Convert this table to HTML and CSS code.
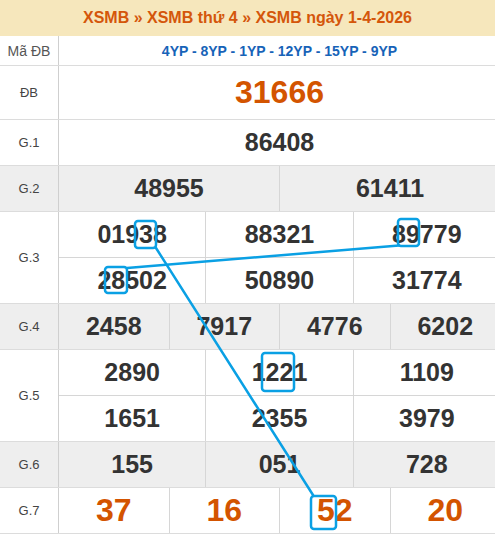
FILE: index.html
```html
<!DOCTYPE html>
<html lang="vi">
<head>
<meta charset="utf-8">
<title>XSMB ngày 1-4-2026</title>
<link rel="stylesheet" href="styles.css">
</head>
<body>
<div class="page">
  <div class="title"><span>XSMB</span> » <span>XSMB thứ 4</span> » <span>XSMB ngày 1-4-2026</span></div>

  <div class="row row-code">
    <div class="lbl lbl-code">Mã ĐB</div>
    <div class="cells c1"><div class="cell code">4YP - 8YP - 1YP - 12YP - 15YP - 9YP</div></div>
  </div>

  <div class="row row-db">
    <div class="lbl">ĐB</div>
    <div class="cells c1"><div class="cell big">31666</div></div>
  </div>

  <div class="row">
    <div class="lbl">G.1</div>
    <div class="cells c1"><div class="cell">86408</div></div>
  </div>

  <div class="row gray">
    <div class="lbl">G.2</div>
    <div class="cells c2"><div class="cell">48955</div><div class="cell">61411</div></div>
  </div>

  <div class="row">
    <div class="lbl">G.3</div>
    <div class="cells c3">
      <div class="cell">01938</div><div class="cell">88321</div><div class="cell">89779</div>
      <div class="cell">28502</div><div class="cell">50890</div><div class="cell">31774</div>
    </div>
  </div>

  <div class="row gray">
    <div class="lbl">G.4</div>
    <div class="cells c4">
      <div class="cell">2458</div><div class="cell">7917</div><div class="cell">4776</div><div class="cell">6202</div>
    </div>
  </div>

  <div class="row">
    <div class="lbl">G.5</div>
    <div class="cells c3">
      <div class="cell">2890</div><div class="cell">1221</div><div class="cell">1109</div>
      <div class="cell">1651</div><div class="cell">2355</div><div class="cell">3979</div>
    </div>
  </div>

  <div class="row gray">
    <div class="lbl">G.6</div>
    <div class="cells c3">
      <div class="cell">155</div><div class="cell">051</div><div class="cell">728</div>
    </div>
  </div>

  <div class="row">
    <div class="lbl">G.7</div>
    <div class="cells c4">
      <div class="cell big">37</div><div class="cell big">16</div><div class="cell big">52</div><div class="cell big">20</div>
    </div>
  </div>

  <svg class="marks" width="500" height="536" viewBox="0 0 500 536" aria-hidden="true">
    <g fill="none" stroke="#0aa0e4" stroke-width="2.5" stroke-linecap="round">
      <line x1="127" y1="268" x2="399" y2="245.5"/>
      <line x1="156" y1="248" x2="313" y2="495"/>
      <rect x="135" y="221" width="21" height="27" rx="3"/>
      <rect x="105" y="267" width="22" height="26" rx="3"/>
      <rect x="398" y="219" width="21" height="27" rx="3"/>
      <rect x="262" y="353" width="32" height="38" rx="3"/>
      <rect x="311" y="496" width="25" height="33" rx="3"/>
    </g>
  </svg>
</div>
</body>
</html>
```

FILE: styles.css
```css
html, body {
  margin: 0;
  padding: 0;
  background: #fff;
  overflow: hidden;
}

.page {
  position: relative;
  width: 500px;
  font-family: "Liberation Sans", Arial, sans-serif;
  color: #333;
}

.title {
  width: 495px;
  height: 36px;
  background: #f6e7bc;
  color: #d4560b;
  font-weight: bold;
  font-size: 16px;
  display: flex;
  align-items: center;
  justify-content: center;
  white-space: pre;
}

.row {
  display: flex;
  border-bottom: 1px solid #dcdcdc;
  background: #fff;
}

.row.gray {
  background: #eeeeee;
}

.lbl {
  width: 58px;
  flex: none;
  border-right: 1px solid #cfcfcf;
  display: flex;
  align-items: center;
  justify-content: center;
  font-size: 13px;
  color: #444;
}

.lbl-code {
  font-size: 14px;
  color: #555;
}

.cells {
  flex: 1;
  display: grid;
  gap: 1px;
  background: #d6d6d6;
}

.c1 { grid-template-columns: 1fr; }
.c2 { grid-template-columns: repeat(2, 1fr); }
.c3 { grid-template-columns: repeat(3, 1fr); }
.c4 { grid-template-columns: repeat(4, 1fr); }

.cell {
  height: 45px;
  display: flex;
  align-items: center;
  justify-content: center;
  background: #fff;
  font-weight: bold;
  font-size: 25px;
  color: #333;
}

.gray .cell {
  background: #eeeeee;
}

.row-code .cell {
  height: 29px;
}

.cell.code {
  font-size: 14px;
  color: #1763b8;
}

.row-db .cell {
  height: 53px;
}

.cell.big {
  font-size: 32px;
  color: #d35400;
}

.marks {
  position: absolute;
  left: 0;
  top: 0;
  pointer-events: none;
}
```
